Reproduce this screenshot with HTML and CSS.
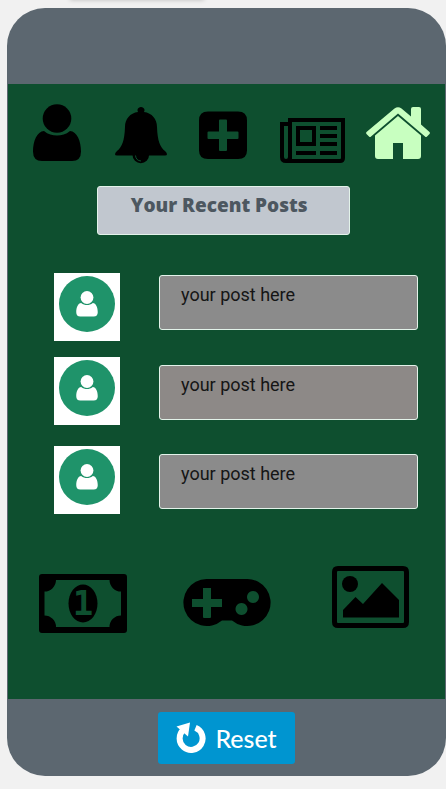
FILE: index.html
```html
<!DOCTYPE html>
<html lang="en">
<head>
<meta charset="utf-8">
<meta name="viewport" content="width=device-width, initial-scale=1">
<title>Your Recent Posts</title>
<link rel="stylesheet" href="styles.css">
</head>
<body>
<svg width="0" height="0" class="defs" aria-hidden="true">
  <symbol id="person" viewBox="0 0 48 58">
    <circle cx="24" cy="14.5" r="14.3"/>
    <path d="M11 27C15 30.500 19.500 31.500 24 31.500S33 30.500 37 27C44 27.500 48 37 48 47.500Q48 57 39 57H9Q0 57 0 47.500C0 37 4 27.500 11 27Z"/>
  </symbol>
</svg>
<div class="phone">
  <header class="phone-top"></header>
  <main class="screen">
    <nav class="top-nav">
      <button class="icon-button" aria-label="Profile">
        <svg width="48" height="60"><use href="#person" width="48" height="58"/></svg>
      </button>
      <button class="icon-button" aria-label="Notifications">
        <svg width="54" height="60" viewBox="0 0 54 60">
          <path d="M27 3a3.300 3.300 0 0 1 3 5C38 9 43 15 43 23C43.500 37 46 43 51 47Q55 51 51 51.500H3Q-1 51 3 47C8 43 10.500 37 11 23C11 15 16 9 24 8a3.300 3.300 0 0 1 3-5Z"/>
          <path d="M18.500 51a8.300 8.300 0 0 0 16.600 0Z"/>
          <path class="cut-line" d="M21.500 51.500a6 6 0 0 0 5.500 5.500"/>
        </svg>
      </button>
      <button class="icon-button" aria-label="New post">
        <svg width="48" height="60" viewBox="0 0 48 60">
          <path fill-rule="evenodd" d="M9 7.500H39Q48 7.500 48 16.500V46.500Q48 55 39 55H9Q0 55 0 46.500V16.500Q0 7.500 9 7.500ZM21 15.500Q20 15.500 20 16.500V27.500H9.500Q8.500 27.500 8.500 28.500V34Q8.500 35 9.500 35H20V46Q20 47 21 47H27Q28 47 28 46V35H38.500Q39.500 35 39.500 34V28.500Q39.500 27.500 38.500 27.500H28V16.500Q28 15.500 27 15.500Z"/>
        </svg>
      </button>
      <button class="icon-button" aria-label="News">
        <svg width="66" height="60" viewBox="0 0 66 60">
          <path fill-rule="evenodd" d="M8 14H65V54Q65 59 60 59H6Q0 59 0 53V18H8ZM12 18V55H60Q61 55 61 54V18ZM4 22V53Q4 55 6 55T8 53V22Z"/>
          <path fill-rule="evenodd" d="M16 22H36V42H16ZM20 26V38H32V26Z"/>
          <path d="M40 22H57V26H40ZM40 30H57V34H40ZM40 38H57V42H40ZM16 47H36V51H16ZM40 47H57V51H40Z"/>
        </svg>
      </button>
      <button class="icon-button icon-button-active" aria-label="Home">
        <svg width="66" height="60" viewBox="0 0 66 60">
          <path d="M1.500 28L29.500 4.500Q33 2 36.500 4.500L46 12.500V5Q46 3 48 3H54Q56 3 56 5V20.500L64.500 28Q65.500 29 64.500 30L62 32.500Q61 33.500 60 32.500L33 9.500L6 32.500Q5 33.500 4 32.500L1.500 30Q.5 29 1.500 28Z"/>
          <path d="M10 31.500L33 12L56 31.500V52Q56 55 53 55H38V39H28V55H13Q10 55 10 52Z"/>
        </svg>
      </button>
    </nav>
    <h1 class="title">Your Recent Posts</h1>
    <ul class="posts">
      <li class="post">
        <div class="avatar"><span class="avatar-disc"><svg width="24" height="26"><use href="#person" width="24" height="26"/></svg></span></div>
        <p class="post-text">your post here</p>
      </li>
      <li class="post">
        <div class="avatar"><span class="avatar-disc"><svg width="24" height="26"><use href="#person" width="24" height="26"/></svg></span></div>
        <p class="post-text post-text-warm">your post here</p>
      </li>
      <li class="post">
        <div class="avatar"><span class="avatar-disc"><svg width="24" height="26"><use href="#person" width="24" height="26"/></svg></span></div>
        <p class="post-text">your post here</p>
      </li>
    </ul>
    <nav class="bottom-nav">
      <button class="icon-button" aria-label="Money">
        <svg width="88" height="68" viewBox="0 0 88 68">
          <path fill-rule="evenodd" d="M3 8H85Q88 8 88 11V64Q88 67 85 67H3Q0 67 0 64V11Q0 8 3 8ZM17 14A11.500 11.500 0 0 1 5.500 25.500V49.500A11.500 11.500 0 0 1 17 61H70.500A11.500 11.500 0 0 1 82 49.500V25.500A11.500 11.500 0 0 1 70.500 14Z"/>
          <ellipse cx="44" cy="37.500" rx="14.500" ry="19"/>
          <text class="bill-digit" x="44" y="49" text-anchor="middle">1</text>
        </svg>
      </button>
      <button class="icon-button" aria-label="Games">
        <svg width="88" height="68" viewBox="0 0 88 68">
          <path fill-rule="evenodd" d="M23.500 13H64.500A23.500 23.500 0 1 1 49 54.500H39A23.500 23.500 0 1 1 23.500 13ZM20 22V33H9V41H20V51Q20 52 21 52H27Q28 52 28 51V41H39V33H28V22ZM70 25a6 6 0 1 0 .01 0ZM58.500 37a6 6 0 1 0 .01 0Z"/>
        </svg>
      </button>
      <button class="icon-button" aria-label="Pictures">
        <svg width="88" height="68" viewBox="0 0 88 68">
          <path fill-rule="evenodd" d="M11 0H76Q82 0 82 6V56Q82 62 76 62H11Q5 62 5 56V6Q5 0 11 0ZM11 5Q10 5 10 6V56Q10 57 11 57H76Q77 57 77 56V6Q77 5 76 5Z"/>
          <circle cx="23" cy="18" r="8"/>
          <path d="M16 51.500V44L28.500 31L36 38L55 17L72 34V51.500Z"/>
        </svg>
      </button>
    </nav>
  </main>
  <footer class="phone-bottom">
    <button class="reset">
      <svg width="30" height="32" viewBox="0 0 30 32" aria-hidden="true">
        <path class="reset-arc" d="M19.500 5.800A11.500 11.500 0 1 1 7.500 7.800"/>
        <path d="M.5 4.500L14 .5L12 14.500Z"/>
      </svg>
      Reset
    </button>
  </footer>
</div>
</body>
</html>
```
FILE: styles.css
```css
* {
  box-sizing: border-box;
}

body {
  margin: 0;
  padding: 8px 0 13px 7px;
  background: #f1f1f1;
  font-family: Roboto, "Liberation Sans", sans-serif;
}

/* Shadow of the bar above the preview */
body::before {
  content: "";
  position: absolute;
  top: -4px;
  left: 70px;
  width: 134px;
  height: 4px;
  box-shadow: 0 0 4px #bbb;
}

.defs {
  position: absolute;
}

.phone {
  display: flex;
  flex-direction: column;
  min-height: calc(100vh - 21px);
  padding: 0 1px;
  border-radius: 38px;
  background: #5c6770;
}

.phone-top {
  height: 76px;
}

.screen {
  flex: 1;
  display: flex;
  flex-direction: column;
  padding: 20px 0;
  background: #0e4f2f;
}

.top-nav {
  display: grid;
  grid-template-columns: 84fr 84fr 80fr 99fr 72fr;
  justify-items: center;
  padding: 0 11px 0 7px;
}

.icon-button {
  display: block;
  padding: 0;
  border: 0;
  background: none;
  color: #000;
  cursor: pointer;
}

.icon-button-active {
  color: #c8ffc0;
}

svg {
  display: block;
  fill: currentColor;
}

.cut-line {
  fill: none;
  stroke: #0e4f2f;
  stroke-width: 1;
}

.title {
  align-self: center;
  width: 58%;
  min-height: 49px;
  margin: 22px 6px 0 0;
  padding: 7px 33px;
  border: 1px solid #e3f3ea;
  border-radius: 3px;
  background: #c1c7cf;
  color: #4d5760;
  font: 800 19px/22px "Open Sans", "Liberation Sans", sans-serif;
  white-space: nowrap;
}

.posts {
  display: flex;
  flex-direction: column;
  gap: 16px;
  margin: 38px 27px 0 46px;
  padding: 0;
  list-style: none;
}

.post {
  display: flex;
  align-items: center;
  gap: 39px;
}

.post:first-child {
  align-items: flex-start;
}

.post:last-child {
  margin-top: 5px;
}

.avatar {
  width: 66px;
  height: 68px;
  padding: 3px 5px;
  background: #fff;
}

.avatar-disc {
  display: flex;
  align-items: center;
  justify-content: center;
  height: 56px;
  border-radius: 50%;
  background: #1f936a;
  color: #fff;
}

.post-text {
  flex: 1;
  min-height: 55px;
  margin: 2px 0 0;
  padding: 8px 21px;
  border: 1px solid #e3f3ea;
  border-radius: 3px;
  background: #8b8b8b;
  color: #151515;
  font-size: 18px;
  line-height: 22px;
}

.post-text-warm {
  background: #8d8987;
}

.bottom-nav {
  display: flex;
  justify-content: space-between;
  margin-top: 52px;
  padding: 0 30px 0 31px;
}

.bill-digit {
  fill: #0e4f2f;
  font: bold 34px "DejaVu Sans Mono", monospace;
}

.phone-bottom {
  display: flex;
  align-items: center;
  justify-content: center;
  height: 77px;
}

.reset {
  display: flex;
  align-items: center;
  gap: 9px;
  height: 52px;
  padding: 0 18px;
  border: 0;
  border-radius: 3px;
  background: #0095d0;
  color: #fff;
  font: 500 25px/30px Lato, sans-serif;
  cursor: pointer;
}

.reset-arc {
  fill: none;
  stroke: #fff;
  stroke-width: 6;
}
```
